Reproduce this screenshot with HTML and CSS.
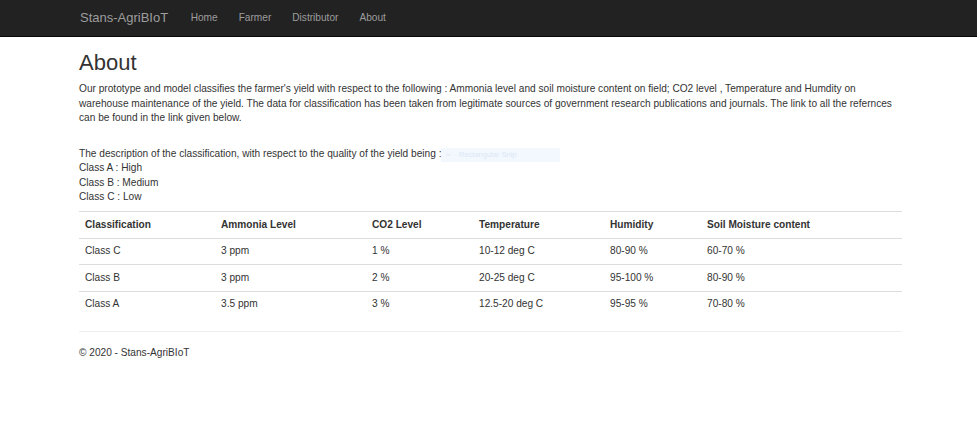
FILE: index.html
```html
<!DOCTYPE html>
<html lang="en">
<head>
<meta charset="utf-8">
<title>About - Stans-AgriBIoT</title>
<link rel="stylesheet" href="styles.css">
</head>
<body>
<header class="navbar">
  <div class="container nav-inner">
    <a class="brand" href="#">Stans-AgriBIoT</a>
    <nav class="nav-links">
      <a href="#">Home</a>
      <a href="#">Farmer</a>
      <a href="#">Distributor</a>
      <a href="#">About</a>
    </nav>
  </div>
</header>
<main class="container body-content">
  <h2 class="title">About</h2>
  <p class="intro">Our prototype and model classifies the farmer's yield with respect to the following : Ammonia level and soil moisture content on field; CO2 level , Temperature and Humdity on warehouse maintenance of the yield. The data for classification has been taken from legitimate sources of government research publications and journals. The link to all the refernces can be found in the link given below.</p>
  <div class="desc">
    <p class="desc-text">The description of the classification, with respect to the quality of the yield being :<br>Class A : High<br>Class B : Medium<br>Class C : Low</p>
    <div class="snip"><span class="snip-icon">✂</span><span>Rectangular Snip</span></div>
  </div>
  <table class="data-table">
    <colgroup>
      <col class="c1"><col class="c2"><col class="c3"><col class="c4"><col class="c5"><col class="c6">
    </colgroup>
    <thead>
      <tr><th>Classification</th><th>Ammonia Level</th><th>CO2 Level</th><th>Temperature</th><th>Humidity</th><th>Soil Moisture content</th></tr>
    </thead>
    <tbody>
      <tr><td>Class C</td><td>3 ppm</td><td>1 %</td><td>10-12 deg C</td><td>80-90 %</td><td>60-70 %</td></tr>
      <tr><td>Class B</td><td>3 ppm</td><td>2 %</td><td>20-25 deg C</td><td>95-100 %</td><td>80-90 %</td></tr>
      <tr><td>Class A</td><td>3.5 ppm</td><td>3 %</td><td>12.5-20 deg C</td><td>95-95 %</td><td>70-80 %</td></tr>
    </tbody>
  </table>
  <hr class="rule">
  <footer class="footer">
    <p>© 2020 - Stans-AgriBIoT</p>
  </footer>
</main>
</body>
</html>
```
FILE: styles.css
```css
* { box-sizing: border-box; }
html, body { margin: 0; padding: 0; }
body {
  font-family: "Liberation Sans", Arial, Helvetica, sans-serif;
  font-size: 10.15px;
  line-height: 14.5px;
  color: #333;
  background: #fff;
}
.container {
  width: 823px;
  margin-left: 79px;
}
.navbar {
  background: #222;
  border-bottom: 1px solid #080808;
  height: 37px;
}
.nav-inner {
  display: flex;
  align-items: center;
  height: 36px;
}
.brand {
  color: #9d9d9d;
  text-decoration: none;
  font-size: 13px;
  line-height: 36px;
  margin-left: 1px;
  margin-right: 12px;
}
.nav-links { display: flex; }
.nav-links a {
  color: #9d9d9d;
  text-decoration: none;
  padding: 0 10.5px;
  line-height: 36px;
}
.title {
  font-size: 22px;
  font-weight: 500;
  line-height: 24.75px;
  margin: 13.5px 0 7px;
  font-family: "Liberation Sans", Arial, sans-serif;
}
.intro { margin: 0 0 21px; }
.desc { position: relative; }
.desc-text { margin: 0 0 6.5px; }
.snip {
  position: absolute;
  left: 362px;
  top: 1px;
  width: 119px;
  height: 14px;
  background: #f3f8fe;
  color: #dce7f4;
  font-size: 7.5px;
  line-height: 14px;
  display: flex;
  gap: 8px;
  padding-left: 5px;
}
.snip-icon { font-size: 6px; }
.data-table {
  width: 823px;
  border-collapse: collapse;
  table-layout: fixed;
  margin-bottom: 14px;
}
.c1 { width: 136px; }
.c2 { width: 151px; }
.c3 { width: 107px; }
.c4 { width: 131px; }
.c5 { width: 97px; }
.c6 { width: 201px; }
.data-table th, .data-table td {
  text-align: left;
  padding: 5.5px 6px;
  line-height: 14.5px;
  border-top: 1px solid #ddd;
}
.data-table th {
  font-weight: bold;
  border-bottom: 1px solid #ddd;
}
.rule {
  border: 0;
  border-top: 1px solid #eee;
  margin: 0 0 14px;
}
.footer p { margin: 0; }
```
